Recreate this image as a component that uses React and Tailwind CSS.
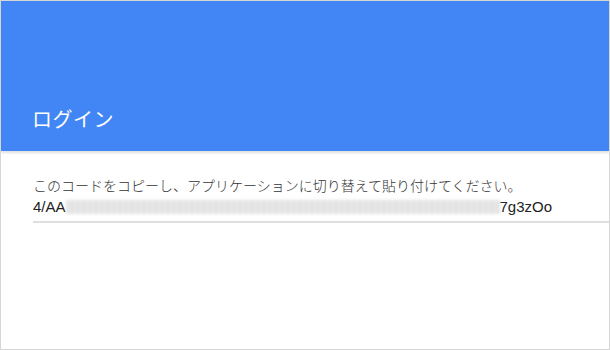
export default function App() {
  return (
    <div className="w-[610px] h-[350px] border border-[#d6d6d6] bg-white flex flex-col overflow-hidden">
      <div className="h-[150px] bg-[#4285f4] flex items-end px-[31px] pb-[18px] shadow-[0_2px_2px_rgba(0,0,0,0.12)] relative z-10">
        <h1 className="text-white text-[20px] leading-[28px] font-normal font-['Noto_Sans_CJK_JP',sans-serif] tracking-[0.5px]">ログイン</h1>
      </div>
      <div className="pt-[23px] pl-[32px]">
        <p className="text-[#333] text-[14px] leading-[22px] font-light font-['Noto_Sans_CJK_JP',sans-serif]">
          このコードをコピーし、アプリケーションに切り替えて貼り付けてください。
        </p>
        <div className="border-b-2 border-[#dedede] pb-[3px] flex items-center text-[#222] text-[15px] leading-[22px] font-['Liberation_Sans',Arial,sans-serif]">
          <span>4/AA</span>
          <span className="inline-block w-[434px] h-[14px] bg-[repeating-linear-gradient(90deg,#d4d4d4_0px,#e6e6e6_3px,#d9d9d9_6px)] blur-[1.5px] opacity-80"></span>
          <span>7g3zOo</span>
        </div>
      </div>
    </div>
  );
}
